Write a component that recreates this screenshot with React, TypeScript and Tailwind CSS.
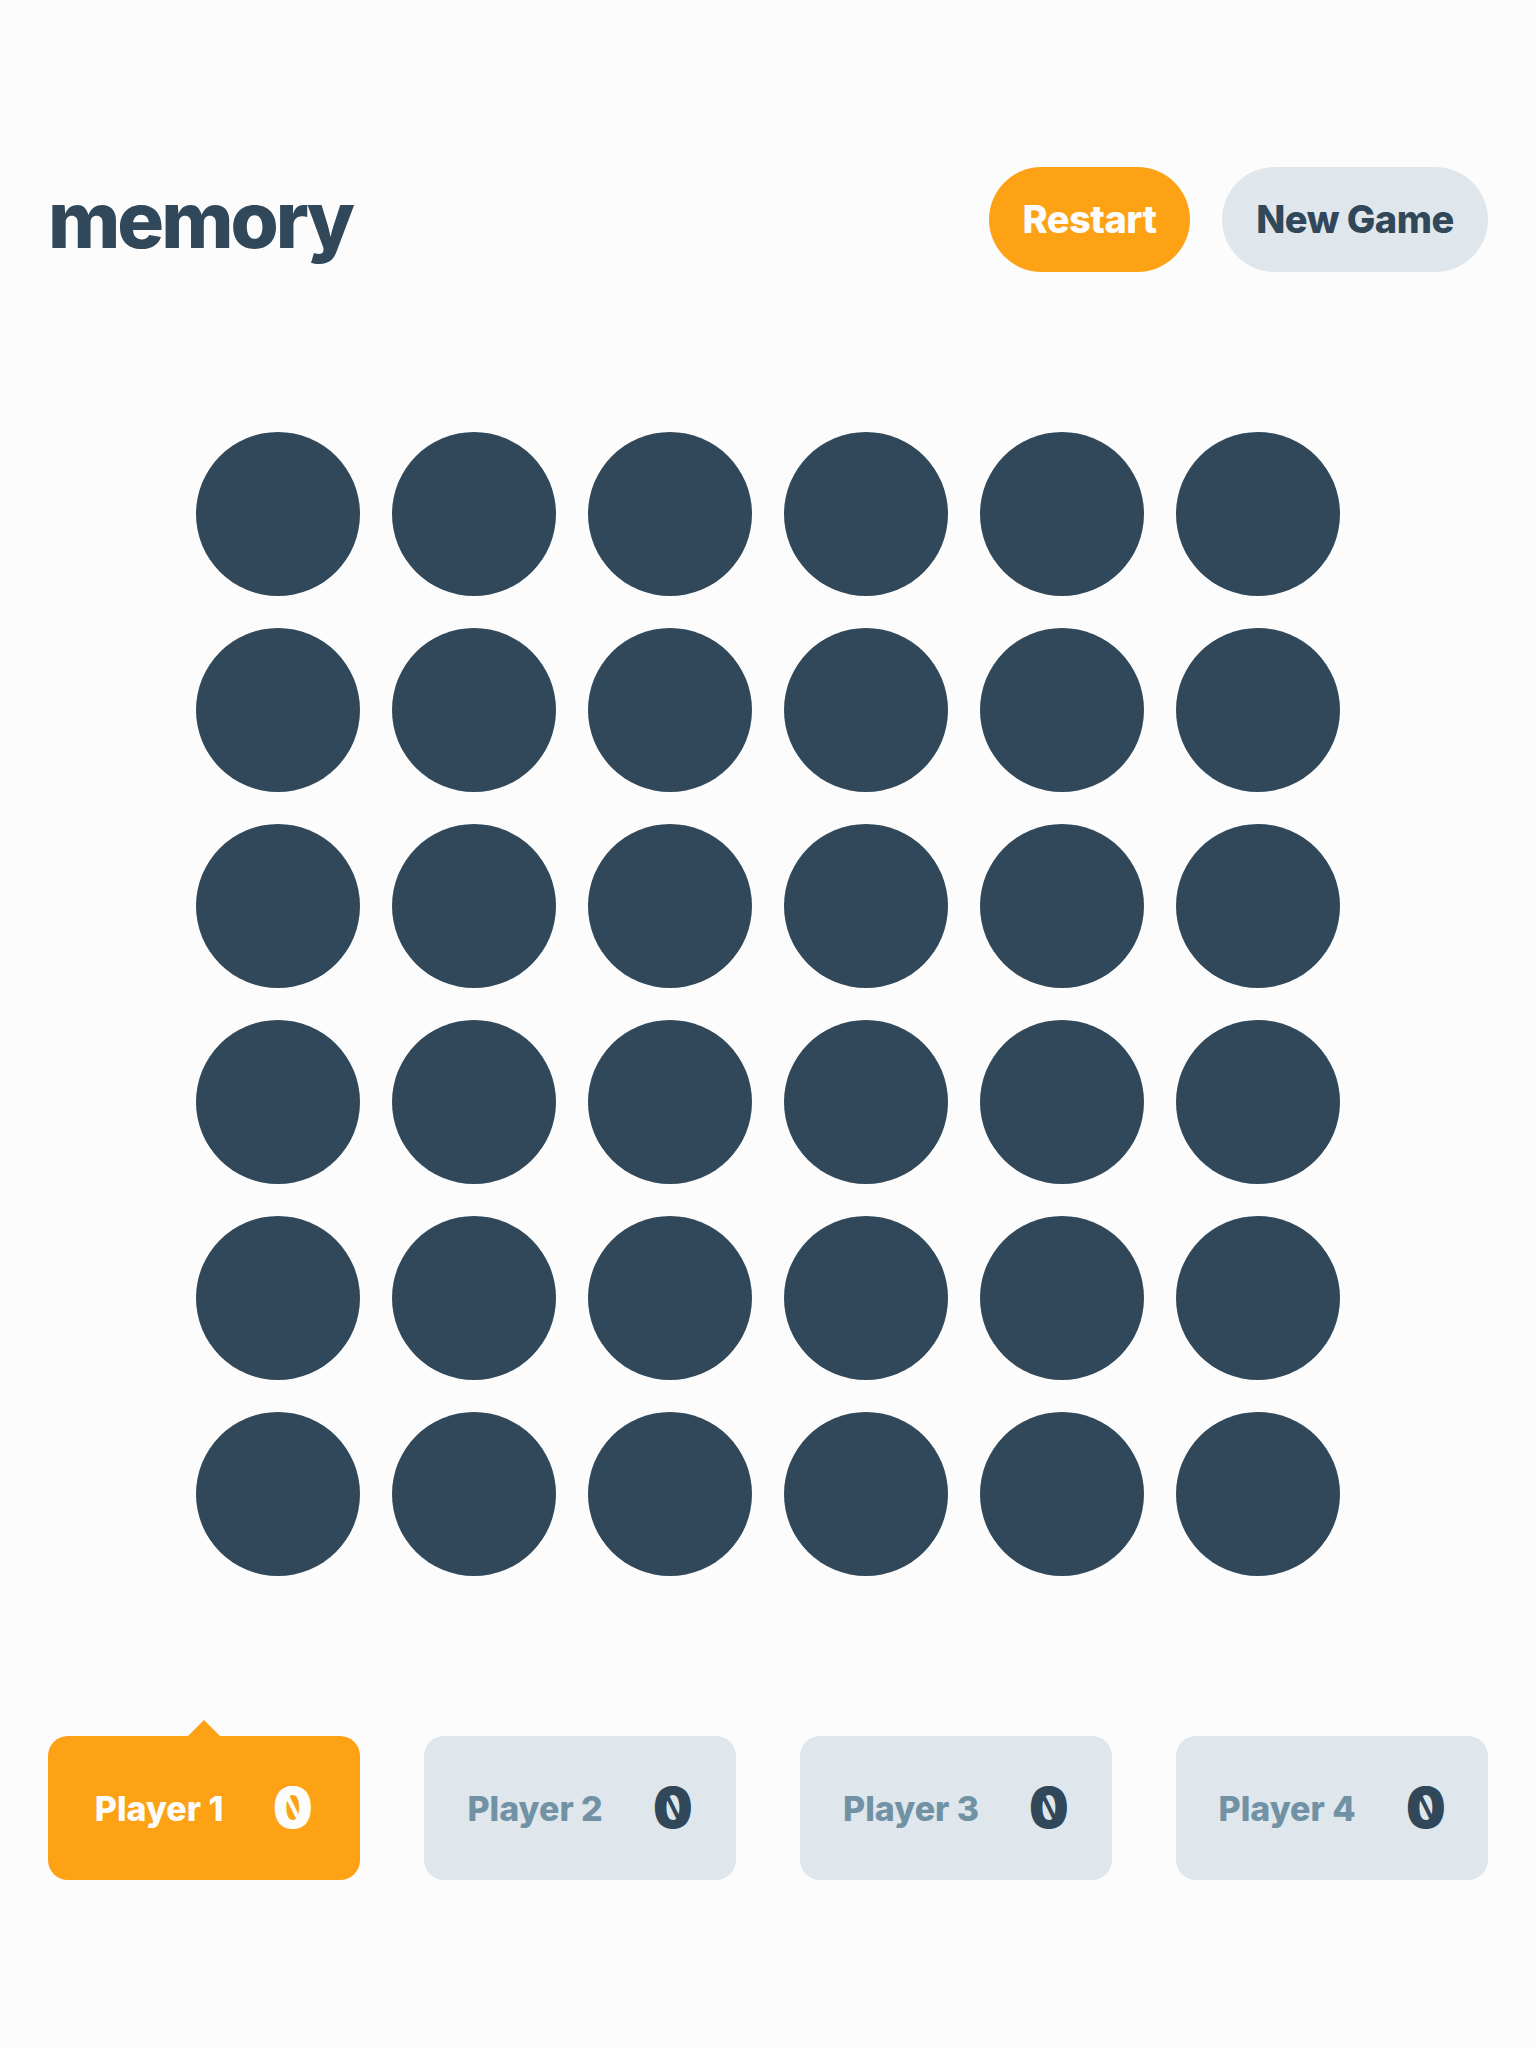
import React from "react";

const players = [
  { name: "Player 1", score: 0, active: true },
  { name: "Player 2", score: 0, active: false },
  { name: "Player 3", score: 0, active: false },
  { name: "Player 4", score: 0, active: false },
];

export default function App() {
  const cells = Array.from({ length: 36 }, (_, i) => i);

  return (
    <div className="min-h-screen w-full bg-[#FCFCFC] font-['Inter',sans-serif]">
      <div className="mx-auto flex w-[1440px] flex-col pt-[167px]">
        {/* header */}
        <header className="flex items-center justify-between">
          <h1 className="text-[78px] font-extrabold leading-none tracking-[-3px] text-[#304859]">
            memory
          </h1>
          <div className="flex gap-[32px]">
            <button className="h-[105px] w-[201px] rounded-full bg-[#FDA214] text-[38px] font-extrabold tracking-[-0.5px] text-[#FCFCFC]">
              Restart
            </button>
            <button className="h-[105px] w-[266px] rounded-full bg-[#DFE7EC] text-[38px] font-extrabold tracking-[-0.5px] text-[#304859]">
              New Game
            </button>
          </div>
        </header>

        {/* board */}
        <div className="mx-auto mt-[160px] grid grid-cols-6 gap-[32px]">
          {cells.map((i) => (
            <button key={i} className="h-[164px] w-[164px] rounded-full bg-[#304859]" />
          ))}
        </div>

        {/* players */}
        <div className="mt-[160px] grid grid-cols-4 gap-[64px]">
          {players.map((p) => (
            <div
              key={p.name}
              className={`relative flex h-[144px] items-center justify-center gap-[50px] rounded-[20px] ${
                p.active ? "bg-[#FDA214]" : "bg-[#DFE7EC]"
              }`}
            >
              {p.active && (
                <span className="absolute -top-[16px] left-1/2 h-0 w-0 -translate-x-1/2 border-x-[16px] border-b-[16px] border-x-transparent border-b-[#FDA214]" />
              )}
              <span
                className={`text-[34px] font-extrabold ${p.active ? "text-[#FCFCFC]" : "text-[#7191A5]"}`}
              >
                {p.name}
              </span>
              {/* slashed zero, mirrored so the slash leans like the design */}
              <span
                className={`-scale-x-100 text-[56px] font-black slashed-zero ${p.active ? "text-[#FCFCFC]" : "text-[#304859]"}`}
              >
                {p.score}
              </span>
            </div>
          ))}
        </div>
      </div>
    </div>
  );
}
